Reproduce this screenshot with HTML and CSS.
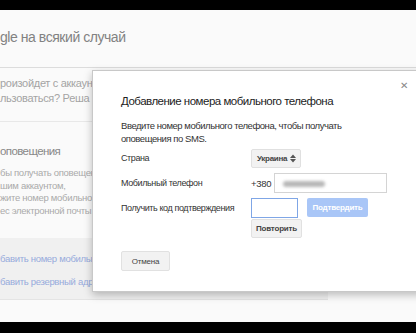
FILE: index.html
```html
<!DOCTYPE html>
<html>
<head>
<meta charset="utf-8">
<link rel="stylesheet" href="styles.css">
</head>
<body>
<div class="bar"></div>
<div class="screen">
  <div class="page">
    <div class="head"><span class="head-title">gle на всякий случай</span></div>
    <div class="sec1">
      <div class="clip">
        <p>роизойдет с аккаун</p>
        <p>льзоваться? Реша</p>
      </div>
    </div>
    <div class="sec2">
      <h2>оповещения</h2>
      <div class="clip">
        <p>бы получать оповещен</p>
        <p>шим аккаунтом,</p>
        <p>жите номер мобильног</p>
        <p>ес электронной почты.</p>
      </div>
    </div>
    <div class="links">
      <div class="clip">
        <a>бавить номер мобильно</a>
        <a>бавить резервный адре</a>
      </div>
    </div>
  </div>
  <div class="modal">
    <span class="close">✕</span>
    <h1>Добавление номера мобильного телефона</h1>
    <p class="desc">Введите номер мобильного телефона, чтобы получать<br>оповещения по SMS.</p>
    <div class="form">
      <span class="lbl">Страна</span>
      <div><span class="select">Украина <svg width="6" height="9" viewBox="0 0 6 9"><path d="M0 4 L3 0.5 L6 4 Z M0 5 L3 8.5 L6 5 Z" fill="#555"/></svg></span></div>
      <span class="lbl">Мобильный телефон</span>
      <div class="phone"><span class="code">+380</span><span class="input wide"><span class="blur"></span></span></div>
      <span class="lbl">Получить код подтверждения</span>
      <div class="verify">
        <div class="vrow"><span class="input short"></span><span class="btn blue">Подтвердить</span></div>
        <span class="btn gray">Повторить</span>
      </div>
    </div>
    <span class="btn gray cancel">Отмена</span>
  </div>
</div>
<div class="bar bottom"></div>
</body>
</html>
```
FILE: styles.css
```css
* { box-sizing: border-box; }
html, body { margin: 0; padding: 0; }
body {
  width: 416px; height: 333px; overflow: hidden;
  background: #000;
  font-family: "Liberation Sans", Arial, sans-serif;
}
.bar { height: 10px; background: #000; }
.bar.bottom { height: 11px; }
.screen {
  position: relative;
  height: 312px;
  background: #fafafa;
  overflow: hidden;
}
.page { color: #a4a4a4; }
.clip { width: 92px; overflow: hidden; white-space: nowrap; }
.head {
  height: 58px;
  border-bottom: 1px solid #dcdcdc;
  display: flex; align-items: center;
  padding-bottom: 4px;
}
.head-title { font-size: 14px; letter-spacing: -0.45px; color: #828282; white-space: nowrap; }
.sec1 {
  height: 54px;
  padding-top: 8px;
  border-bottom: 1px solid #e8e8e8;
}
.sec1 p { margin: 0; font-size: 11px; letter-spacing: -0.3px; line-height: 15px; color: #a4a4a4; }
.sec2 { padding-top: 21px; height: 116px; }
.sec2 h2 { margin: 0 0 8px; font-size: 11.5px; letter-spacing: -0.6px; font-weight: normal; color: #888; line-height: 16px; }
.sec2 p { margin: 0; font-size: 9.5px; letter-spacing: -0.3px; line-height: 12.5px; color: #aaa; }
.links {
  width: 328px;
  height: 62px;
  background: #f0f0f0;
  border-bottom: 1px solid #e4e4e4;
  padding-top: 15px;
}
.links .clip { display: flex; flex-direction: column; gap: 11px; }
.links a { font-size: 9.5px; letter-spacing: -0.3px; line-height: 12px; color: #97abdc; }
.modal {
  position: absolute;
  left: 92px; top: 60px;
  width: 340px; height: 222px;
  background: #fff;
  border: 1px solid #c8c8c8;
  box-shadow: 0 3px 8px rgba(0,0,0,0.25);
  padding: 22px 0 0 28px;
  color: #222;
}
.close {
  position: absolute; left: 307px; top: 9px;
  font-size: 10px; color: #888;
}
.modal h1 {
  margin: 0; font-size: 11.5px; letter-spacing: -0.5px; font-weight: normal; line-height: 16px; color: #222;
}
.desc { margin: 10px 0 0; font-size: 9.5px; letter-spacing: -0.45px; line-height: 13px; color: #333; }
.form {
  margin-top: 3px;
  display: grid;
  grid-template-columns: 130px auto;
  row-gap: 5px;
  align-items: center;
  font-size: 9px;
  letter-spacing: -0.4px;
}
.lbl { color: #333; align-self: start; line-height: 20px; white-space: nowrap; }
.select {
  display: inline-flex; align-items: center; gap: 3px;
  height: 19px; padding: 0 4px 0 5px;
  background: #f2f2f2; border: 1px solid #e0e0e0; border-radius: 2px;
  font-size: 8px; letter-spacing: -0.3px; font-weight: bold; color: #444;
}
.phone { display: flex; align-items: center; gap: 3px; }
.code { font-size: 9.5px; letter-spacing: -0.3px; color: #333; }
.input { display: inline-block; height: 20px; background: #fff; border: 1px solid #d4d4d4; }
.input.wide { width: 113px; position: relative; }
.blur {
  position: absolute; left: 8px; top: 7px; width: 42px; height: 6px;
  background: #b8b8b8; border-radius: 3px; filter: blur(1.5px);
}
.input.short { width: 47px; border-color: #7fa6e6; }
.verify { display: flex; flex-direction: column; align-items: flex-start; }
.vrow { display: flex; gap: 9px; align-items: flex-start; }
.btn {
  display: inline-flex; align-items: center; justify-content: center;
  border-radius: 2px; font-weight: bold; font-size: 8px; letter-spacing: -0.2px;
}
.btn.blue { width: 61px; height: 19px; background: #a9c6f7; color: #fff; }
.btn.gray { background: #f2f2f2; border: 1px solid #e1e1e1; color: #444; }
.verify .btn.gray { width: 51px; height: 19px; margin-top: 1px; }
.cancel { width: 49px; height: 20px; margin-top: 13px; font-weight: normal; font-size: 8px; color: #444; }
```
